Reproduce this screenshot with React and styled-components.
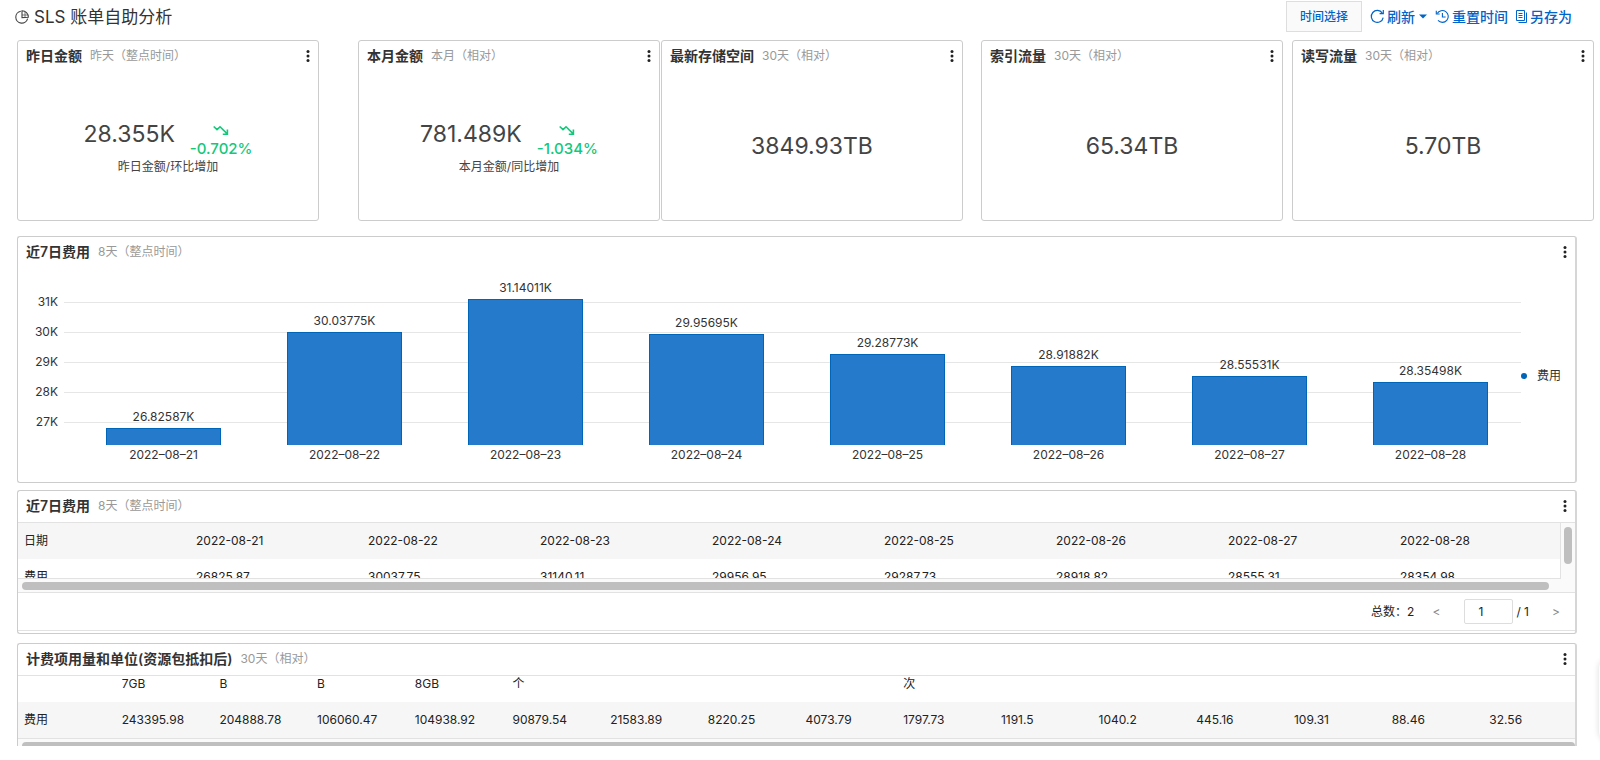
import React from "react";
import styled, { createGlobalStyle } from "styled-components";

const GlobalStyle = createGlobalStyle`
  *, *::before, *::after { box-sizing: border-box; }
  body {
    margin: 0;
    background: #fff;
    color: #333;
    font: 12px/18px Inter, "Noto Sans CJK SC", sans-serif;
    overflow-x: hidden;
  }
  button, input { font: inherit; color: inherit; }
  h1, h2, p { margin: 0; }
`;

const Page = styled.main`
  padding: 1px 6px 0 17px;
`;

const TopBar = styled.header`
  display: flex;
  align-items: center;
  justify-content: space-between;
  height: 31px;
  margin-bottom: 8px;
  padding-right: 22px;
`;

const Title = styled.h1`
  display: flex;
  align-items: center;
  gap: 5px;
  margin-left: -2px;
  font-size: 17px;
  line-height: 24px;
  font-weight: 400;
  color: #333;
`;

const Actions = styled.div`
  display: flex;
  align-items: center;
  gap: 8px;
`;

const TimeButton = styled.button`
  height: 31px;
  padding: 0 13px;
  border: 1px solid #dedede;
  background: #fafafa;
  color: #0064c8;
  font-weight: 500;
  line-height: 18px;
`;

const LinkButton = styled.button`
  display: flex;
  align-items: center;
  gap: 2px;
  padding: 0;
  border: 0;
  background: none;
  color: #0064c8;
  font-size: 14px;
  line-height: 20px;
  font-weight: 500;
`;

const StatRow = styled.section`
  display: flex;
  margin-bottom: 15px;
`;

const Panel = styled.section`
  display: flex;
  flex-direction: column;
  border: 1px solid #ccc;
  border-radius: 3px;
  background: #fff;
`;

const StatPanel = styled(Panel)`
  flex: 1 1 0;
  height: 181px;
  margin-left: ${(p) => p.$gap}px;
`;

const WidePanel = styled(Panel)`
  margin: 0 17px ${(p) => p.$after}px 0;
  border-width: 1px 2px 1px 1px;
  border-color: #ccc #d6d6d6 #ccc #ccc;
`;

const CutPanel = styled(WidePanel)`
  border-bottom: 0;
  border-radius: 3px 3px 0 0;
`;

const PanelHead = styled.div`
  display: flex;
  align-items: center;
  gap: 8px;
  height: 31px;
  padding: 0 8px 1px;
`;

const PanelTitle = styled.h2`
  font-size: 14px;
  line-height: 20px;
  font-weight: 600;
  color: #333;
`;

const Range = styled.span`
  flex: 1;
  color: #999;
`;

const MoreButton = styled.button`
  display: flex;
  padding: 0;
  border: 0;
  background: none;
  color: #222;
`;

const StatBody = styled.div`
  flex: 1;
  display: flex;
  flex-direction: column;
  align-items: center;
  justify-content: center;
`;

const StatLine = styled.div`
  display: flex;
  align-items: flex-start;
  gap: 15px;
`;

const Value = styled.p`
  font-size: 23px;
  line-height: 32px;
  color: #444;
`;

const Trend = styled.div`
  display: flex;
  flex-direction: column;
  align-items: center;
  gap: 3px;
  padding-top: 7px;
  font-size: 15px;
  line-height: 20px;
  font-weight: 500;
  color: #15c77b;
`;

const Caption = styled.p`
  line-height: 16px;
  color: #444;
`;

const Chart = styled.div`
  display: flex;
  height: 214px;
  padding: 7px 14px 0 12px;
`;

const Axis = styled.div`
  width: 28px;
  padding-top: 15px;
  text-align: right;
`;

const AxisLabel = styled.div`
  height: 30px;
  line-height: 24px;
`;

const Plot = styled.div`
  flex: 1;
  display: grid;
  height: 190px;
  margin-left: 6px;
`;

const GridLines = styled.div`
  grid-area: 1 / 1;
  padding-top: 27px;
`;

const GridLine = styled.div`
  height: 30px;
  border-top: 1px solid #e6e6e6;
`;

const Bars = styled.div`
  grid-area: 1 / 1;
  display: flex;
  padding-left: 9px;
`;

const BarSlot = styled.div`
  flex: 1;
  display: flex;
  flex-direction: column;
  align-items: center;
  justify-content: flex-end;
`;

const Bar = styled.div`
  width: 63%;
  margin-top: 2px;
  border: 1px solid #0064b8;
  border-bottom: 0;
  background: #267acc;
`;

const BarDate = styled.div`
  line-height: 20px;
`;

const Legend = styled.div`
  display: flex;
  align-items: center;
  align-self: flex-start;
  gap: 10px;
  height: 18px;
  margin-top: 92px;
`;

const Dot = styled.span`
  width: 6px;
  height: 6px;
  border-radius: 50%;
  background: #0064b8;
`;

const Viewport = styled.div`
  display: grid;
  grid-template-columns: minmax(0, 1fr) ${(p) => (p.$rail ? "15px" : "0")};
  border-top: 1px solid #e2e2e2;
`;

const Clip = styled.div`
  display: flex;
  align-items: ${(p) => (p.$end ? "flex-end" : "flex-start")};
  height: ${(p) => p.$height}px;
  overflow: hidden;
  border-bottom: 1px solid #e2e2e2;
`;

const Table = styled.table`
  flex: none;
  width: calc(100% + 6px);
  table-layout: fixed;
  border-collapse: collapse;
  color: #222;
`;

const Row = styled.tr`
  height: 36px;
  background: ${(p) => (p.$shade ? "#f6f6f6" : "#fff")};
`;

const cell = `
  padding: 0 0 0 6px;
  text-align: left;
  font-weight: 400;
  white-space: nowrap;
`;
const Th = styled.th`${cell}`;
const Td = styled.td`${cell}`;

const Rail = styled.div`
  padding: 4px 3px;
  border-left: 1px solid #e2e2e2;
  background: #fafafa;
`;

const RailThumb = styled.div`
  width: 8px;
  height: 37px;
  border-radius: 4px;
  background: #bfbfbf;
`;

const Track = styled.div`
  height: ${(p) => p.$height}px;
  padding: 3px ${(p) => p.$right}px 0 4px;
  border-bottom: ${(p) => (p.$line ? "1px solid #e2e2e2" : "0")};
  background: #fafafa;
  overflow: hidden;
`;

const Thumb = styled.div`
  height: 8px;
  border-radius: 4px;
  background: #bfbfbf;
`;

const Pager = styled.nav`
  display: flex;
  align-items: center;
  justify-content: flex-end;
  height: 38px;
  margin-bottom: 2px;
  padding-right: 13px;
  border-bottom: 1px solid #e2e2e2;
  color: #222;
`;

const Total = styled.span`
  margin-right: 16px;
`;

const Step = styled.button`
  width: 12px;
  padding: 0;
  border: 0;
  background: none;
  color: #888;
`;

const PageInput = styled.input`
  width: 49px;
  height: 25px;
  margin: 0 3px 0 22px;
  padding: 0 0 0 13px;
  border: 1px solid #ddd;
  border-radius: 2px;
  background: #fff;
`;

const PageCount = styled.span`
  margin-right: 21px;
`;

const SideHandle = styled.div`
  position: fixed;
  right: -39px;
  bottom: 20px;
  width: 40px;
  height: 80px;
  border-radius: 8px;
  background: #fff;
  box-shadow: 0 0 6px rgba(0, 0, 0, 0.14);
`;

const PieIcon = () => (
  <svg width="14" height="14" viewBox="0 0 14 14" fill="none" stroke="#444" strokeWidth="1.1" aria-hidden="true">
    <path d="M5.800 1.200A6 6 0 1 0 12.600 8.600" />
    <path d="M7 7.600V.8a6.200 6.200 0 0 1 6.300 6.400L7 7.600Z" />
    <path d="M10 1.900V7M7 5h5.700" strokeWidth=".7" />
  </svg>
);

const RefreshIcon = () => (
  <svg width="15" height="15" viewBox="0 0 15 15" fill="none" stroke="currentColor" strokeWidth="1.2" aria-hidden="true">
    <path d="M13.200 8.600A6 6 0 1 1 12.300 4.100" />
    <path d="M13.300 1v3.700H9.600" />
  </svg>
);

const HistoryIcon = () => (
  <svg width="15" height="15" viewBox="0 0 15 15" fill="none" stroke="currentColor" strokeWidth="1.1" aria-hidden="true">
    <path d="M2.200 4.600A5.900 5.900 0 1 1 3 11.400" />
    <path d="M1.300 1.800v3.200h3.400M7.400 4v4h3.200" />
  </svg>
);

const CopyIcon = () => (
  <svg width="12" height="14" viewBox="0 0 12 14" fill="none" stroke="currentColor" aria-hidden="true">
    <path d="M.5.500h8v10h-8zM2.500 3.500h4M2.500 5.500h4M2.500 7.500h4" />
    <path d="M10.500 2.500v10h-8" />
  </svg>
);

const Caret = styled.svg`
  margin-left: 2px;
`;

const CaretIcon = () => (
  <Caret width="8" height="5" viewBox="0 0 8 5" aria-hidden="true">
    <path d="M0 .5h8L4 4.500Z" fill="currentColor" />
  </Caret>
);

const DownIcon = () => (
  <svg width="16" height="11" viewBox="0 0 16 11" fill="none" stroke="currentColor" strokeWidth="1.6" aria-hidden="true">
    <path d="M.7 1.500 4 4.600 7 1.800 14 8.600M9.800 9.200h4.600V4.600" />
  </svg>
);

const MoreIcon = () => (
  <svg width="4" height="14" viewBox="0 0 4 14" fill="currentColor" aria-hidden="true">
    <circle cx="2" cy="2.500" r="1.500" />
    <circle cx="2" cy="7" r="1.500" />
    <circle cx="2" cy="11.500" r="1.500" />
  </svg>
);

const Head = ({ title, range }) => (
  <PanelHead>
    <PanelTitle>{title}</PanelTitle>
    <Range>{range}</Range>
    <MoreButton type="button" aria-label="更多">
      <MoreIcon />
    </MoreButton>
  </PanelHead>
);

const stats = [
  { title: "昨日金额", range: "昨天（整点时间）", value: "28.355K", change: "-0.702%", caption: "昨日金额/环比增加", gap: 0 },
  { title: "本月金额", range: "本月（相对）", value: "781.489K", change: "-1.034%", caption: "本月金额/同比增加", gap: 39 },
  { title: "最新存储空间", range: "30天（相对）", value: "3849.93TB", gap: 1 },
  { title: "索引流量", range: "30天（相对）", value: "65.34TB", gap: 18 },
  { title: "读写流量", range: "30天（相对）", value: "5.70TB", gap: 9 },
];

const days = [
  { date: "2022-08-21", label: "26.82587K", cost: "26825.87" },
  { date: "2022-08-22", label: "30.03775K", cost: "30037.75" },
  { date: "2022-08-23", label: "31.14011K", cost: "31140.11" },
  { date: "2022-08-24", label: "29.95695K", cost: "29956.95" },
  { date: "2022-08-25", label: "29.28773K", cost: "29287.73" },
  { date: "2022-08-26", label: "28.91882K", cost: "28918.82" },
  { date: "2022-08-27", label: "28.55531K", cost: "28555.31" },
  { date: "2022-08-28", label: "28.35498K", cost: "28354.98" },
];

const ticks = ["31K", "30K", "29K", "28K", "27K"];
const AXIS_FLOOR = 26270;
const PX_PER_K = 30;
const barHeight = (cost) => Math.round(((Number(cost) - AXIS_FLOOR) / 1000) * PX_PER_K);

const units = ["", "7GB", "B", "B", "8GB", "个", "", "", "", "次", "", "", "", "", "", ""];
const usage = [
  "243395.98", "204888.78", "106060.47", "104938.92", "90879.54", "21583.89", "8220.25", "4073.79",
  "1797.73", "1191.5", "1040.2", "445.16", "109.31", "88.46", "32.56",
];

export default function App() {
  return (
    <>
      <GlobalStyle />
      <Page>
        <TopBar>
          <Title>
            <PieIcon />
            SLS 账单自助分析
          </Title>
          <Actions>
            <TimeButton type="button">时间选择</TimeButton>
            <LinkButton type="button">
              <RefreshIcon />
              刷新
              <CaretIcon />
            </LinkButton>
            <LinkButton type="button">
              <HistoryIcon />
              重置时间
            </LinkButton>
            <LinkButton type="button">
              <CopyIcon />
              另存为
            </LinkButton>
          </Actions>
        </TopBar>

        <StatRow>
          {stats.map((s) => (
            <StatPanel key={s.title} $gap={s.gap}>
              <Head title={s.title} range={s.range} />
              <StatBody>
                <StatLine>
                  <Value>{s.value}</Value>
                  {s.change && (
                    <Trend>
                      <DownIcon />
                      {s.change}
                    </Trend>
                  )}
                </StatLine>
                {s.caption && <Caption>{s.caption}</Caption>}
              </StatBody>
            </StatPanel>
          ))}
        </StatRow>

        <WidePanel $after={7}>
          <Head title="近7日费用" range="8天（整点时间）" />
          <Chart>
            <Axis>
              {ticks.map((t) => (
                <AxisLabel key={t}>{t}</AxisLabel>
              ))}
            </Axis>
            <Plot>
              <GridLines>
                {ticks.map((t) => (
                  <GridLine key={t} />
                ))}
              </GridLines>
              <Bars>
                {days.map((d) => (
                  <BarSlot key={d.date}>
                    {d.label}
                    <Bar style={{ height: barHeight(d.cost) }} />
                    <BarDate>{d.date.replaceAll("-", "–")}</BarDate>
                  </BarSlot>
                ))}
              </Bars>
            </Plot>
            <Legend>
              <Dot />
              费用
            </Legend>
          </Chart>
        </WidePanel>

        <WidePanel $after={9}>
          <Head title="近7日费用" range="8天（整点时间）" />
          <Viewport $rail>
            <Clip $height={56}>
              <Table>
                <thead>
                  <Row $shade>
                    <Th scope="col">日期</Th>
                    {days.map((d) => (
                      <Th scope="col" key={d.date}>{d.date}</Th>
                    ))}
                  </Row>
                </thead>
                <tbody>
                  <Row>
                    <Th scope="row">费用</Th>
                    {days.map((d) => (
                      <Td key={d.date}>{d.cost}</Td>
                    ))}
                  </Row>
                </tbody>
              </Table>
            </Clip>
            <Rail>
              <RailThumb />
            </Rail>
          </Viewport>
          <Track $height={14} $right={26} $line>
            <Thumb />
          </Track>
          <Pager aria-label="分页">
            <Total>总数：2</Total>
            <Step type="button" aria-label="上一页">&lt;</Step>
            <PageInput aria-label="页码" defaultValue="1" />
            <PageCount>/ 1</PageCount>
            <Step type="button" aria-label="下一页">&gt;</Step>
          </Pager>
        </WidePanel>

        <CutPanel $after={0}>
          <Head title="计费项用量和单位(资源包抵扣后)" range="30天（相对）" />
          <Viewport>
            <Clip $height={63} $end>
              <Table>
                <thead>
                  <Row>
                    {units.map((u, i) => (
                      <Th scope="col" key={i}>{u}</Th>
                    ))}
                  </Row>
                </thead>
                <tbody>
                  <Row $shade>
                    <Th scope="row">费用</Th>
                    {usage.map((u) => (
                      <Td key={u}>{u}</Td>
                    ))}
                  </Row>
                </tbody>
              </Table>
            </Clip>
          </Viewport>
          <Track $height={7} $right={0}>
            <Thumb />
          </Track>
        </CutPanel>
      </Page>
      <SideHandle aria-hidden="true" />
    </>
  );
}
